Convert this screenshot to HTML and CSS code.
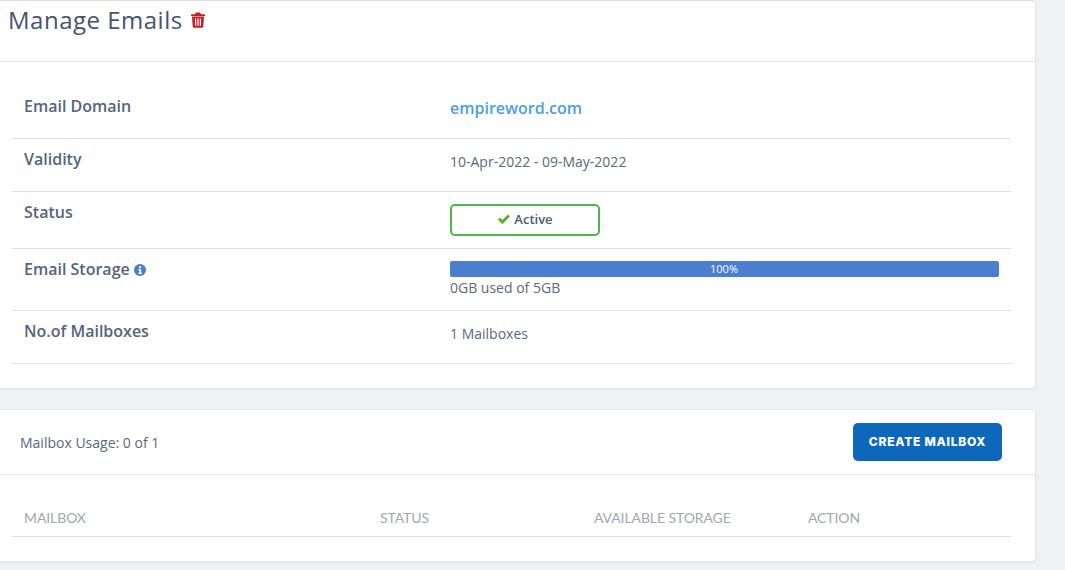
FILE: index.html
```html
<!DOCTYPE html>
<html lang="en">
<head>
<meta charset="utf-8">
<title>Manage Emails</title>
<link rel="stylesheet" href="styles.css">
</head>
<body>
<main class="page">
  <section class="card details">
    <header class="title-bar">
      <h1>Manage Emails</h1>
      <svg class="trash" viewBox="0 0 14 16" aria-hidden="true"><path d="M5 0.6h4l1 1.6h3.2a.8.8 0 0 1 .8.8v1H0v-1a.8.8 0 0 1 .8-.8H4z"/><path fill-rule="evenodd" d="M1 4.6h12l-.7 10a1.3 1.3 0 0 1-1.3 1.2H3a1.3 1.3 0 0 1-1.3-1.2zM4 6.4v7.4h1.2V6.4zM6.4 6.4v7.4h1.2V6.4zM8.8 6.4v7.4H10V6.4z"/></svg>
    </header>
    <div class="rows">
      <div class="row row-domain"><div class="label">Email Domain</div><a class="domain" href="#">empireword.com</a></div>
      <div class="row row-validity"><div class="label">Validity</div><div class="value">10-Apr-2022 - 09-May-2022</div></div>
      <div class="row row-status"><div class="label">Status</div><div><span class="badge"><svg class="check" viewBox="0 0 14 11" aria-hidden="true"><path d="M1 5.6l1.9-1.9 2.4 2.4L11 .6l2 1.9-7.7 7.7z"/></svg>Active</span></div></div>
      <div class="row row-storage">
        <div class="label">Email Storage <svg class="info" viewBox="0 0 12 12" aria-hidden="true"><circle cx="6" cy="6" r="6"/><rect class="info-mark" x="5" y="2.2" width="2" height="1.8"/><path class="info-mark" d="M4.4 5h2.7v3.8H8V10H4.4V8.8h1V6.2h-1z"/></svg></div>
        <div><div class="bar">100%</div><div class="value used">0GB used of 5GB</div></div>
      </div>
      <div class="row row-boxes"><div class="label">No.of Mailboxes</div><div class="value">1 Mailboxes</div></div>
    </div>
  </section>
  <section class="card usage">
    <div class="usage-head"><span class="value">Mailbox Usage: 0 of 1</span><button class="create" type="button">CREATE MAILBOX</button></div>
    <div class="table-head"><span>MAILBOX</span><span>STATUS</span><span>AVAILABLE STORAGE</span><span>ACTION</span></div>
  </section>
</main>
</body>
</html>
```
FILE: styles.css
```css
* { box-sizing: border-box; }
html, body { margin: 0; height: 100%; }
body { background: #f0f1f5; font-family: "Open Sans", sans-serif; color: #4a5a70; overflow: hidden; }
.page { width: 1036px; display: flex; flex-direction: column; gap: 20px; }
.card { background: #fff; border: 1px solid #e6e7ea; border-left: 0; border-radius: 0 5px 5px 0; box-shadow: 0 1px 2px rgba(0,0,0,.05); }
.details { height: 389px; border-top-color: #dcdde0; }
.title-bar { height: 61px; border-bottom: 1px solid #e2e3e6; padding: 3px 0 0 8px; display: flex; align-items: flex-start; }
h1 { margin: 0; font-size: 24px; line-height: 32px; font-weight: 500; letter-spacing: .5px; color: #44546f; }
.trash { width: 14px; height: 16px; margin: 8px 0 0 8px; fill: #c4202c; }
.rows { margin: 0 24px 0 12px; }
.row { display: grid; grid-template-columns: 426px 1fr; padding: 0 12px 0 12px; border-bottom: 1px solid #dfe0e3; }
.row-domain { height: 77px; padding-top: 32px; }
.row-validity { height: 53px; padding-top: 8px; }
.row-status { height: 57px; padding-top: 8px; }
.row-storage { height: 62px; padding-top: 8px; }
.row-boxes { height: 53px; padding-top: 8px; }
.label { font-size: 16px; line-height: 24px; font-weight: 600; color: #55647a; }
.value { font-size: 14px; line-height: 20px; color: #5a687c; }
.row-validity .value, .row-boxes .value { padding-top: 5px; }
.domain { font-size: 16px; line-height: 24px; font-weight: 600; color: #4c9ee3; text-decoration: none; padding-top: 2px; }
.badge { display: flex; align-items: center; justify-content: center; width: 150px; height: 32px; margin-top: 4px; padding-bottom: 2px; border: 2px solid #4cb648; border-radius: 5px; font-size: 13px; font-weight: 600; color: #4a5a70; }
.check { width: 14px; height: 11px; margin-right: 3px; fill: #5fae26; }
.info { width: 12px; height: 12px; margin-left: 0; vertical-align: -1px; fill: #4a7fc6; }
.info-mark { fill: #fff; }
.row-storage .bar { margin-top: 4px; }
.bar { height: 16px; background: #4a7fd0; border-radius: 2px; color: #fff; font-size: 11px; line-height: 15px; text-align: center; padding-right: 1px; }
.used { line-height: 22px; }
.usage { height: 153px; }
.usage-head { height: 65px; border-bottom: 1px solid #e6e7ea; padding: 0 33px 0 20px; display: flex; align-items: center; justify-content: space-between; }
.usage-head .value { padding-top: 2px; }
.create { width: 149px; height: 38px; background: #0d68bc; color: #fff; border: 0; border-radius: 5px; font-family: "Inter", sans-serif; font-size: 12px; font-weight: 800; letter-spacing: .75px; margin-top: -1px; padding: 0; }
.table-head { margin: 0 24px 0 12px; height: 62px; padding: 24px 0 0 12px; border-bottom: 1px solid #dfe0e3; display: grid; grid-template-columns: 356px 214px 214px 1fr; align-items: center; font-family: "Lato", sans-serif; font-size: 14px; letter-spacing: -.1px; color: #a3a6ae; }
```
